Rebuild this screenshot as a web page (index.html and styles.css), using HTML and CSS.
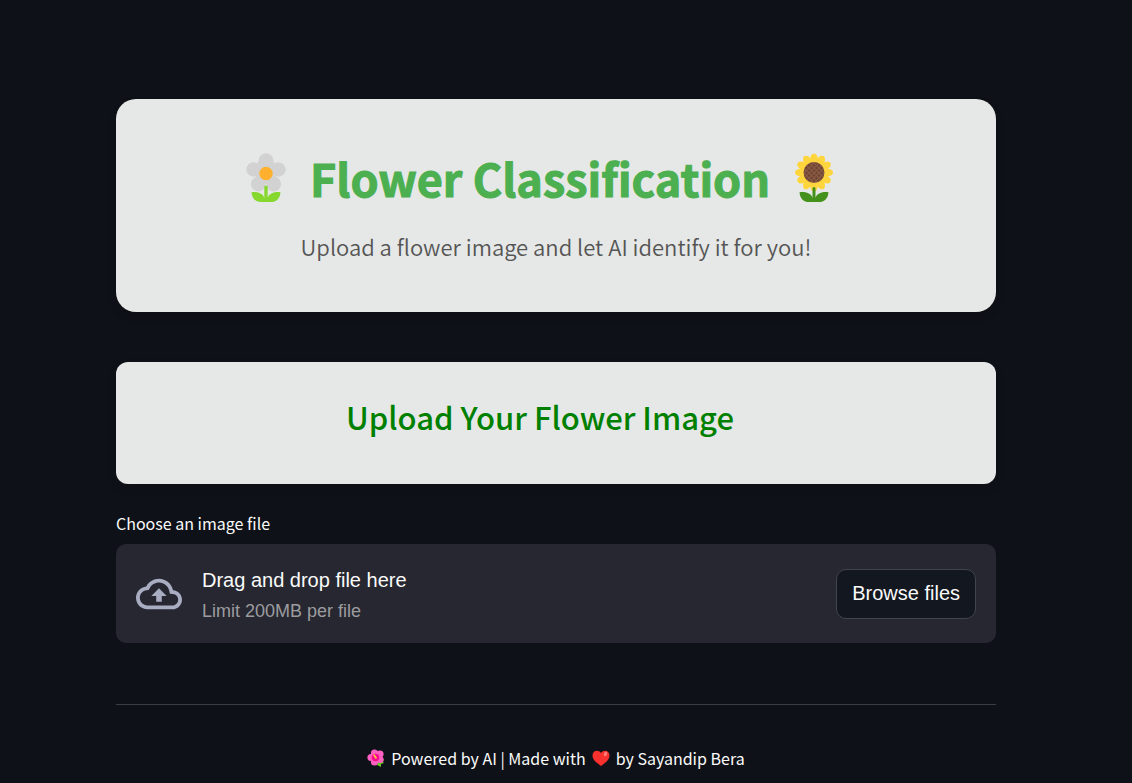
FILE: index.html
```html
<!DOCTYPE html>
<html lang="en">
<head>
<meta charset="utf-8">
<meta name="viewport" content="width=device-width, initial-scale=1">
<title>Flower Classification</title>
<link rel="stylesheet" href="styles.css">
</head>
<body>
<main class="page">
  <header class="card hero">
    <h1 class="hero-title">
      <svg class="hero-icon" viewBox="0 0 40 50" aria-hidden="true">
        <g fill="#d2d2d2"><circle cx="20" cy="7.500" r="7.300"/><circle cx="7.500" cy="16.500" r="7.200"/><circle cx="32.500" cy="16.500" r="7.200"/><circle cx="12.300" cy="31" r="7.400"/><circle cx="27.700" cy="31" r="7.400"/><path d="M13 7.500h14l5 9-4.500 14.500h-15L8 16.500z"/></g>
        <path fill="#86d82f" d="M18.300 33.500q1.700-2 3.400 0V45c1-4 6-6.800 12.800-5.800C34 46 30 49 25 49H15C10 49 6 46 5.500 39.200c6.800-1 11.800 1.800 12.800 5.800z"/>
        <circle cx="20" cy="20.500" r="6.700" fill="#ffb02e"/>
      </svg>
      <span>Flower Classification</span>
      <svg class="hero-icon" viewBox="0 0 40 50" aria-hidden="true">
        <defs><pattern id="seeds" width="5" height="5" patternUnits="userSpaceOnUse"><rect width="5" height="5" fill="#6d4534"/><path d="M0 0l5 5M5 0L0 5" stroke="#8d5b43" stroke-width="1.100"/></pattern></defs>
        <g fill="#ffd53e"><circle cx="20" cy="19.500" r="14.500"/>
          <g id="petals"><ellipse cx="20" cy="6" rx="3.800" ry="5.500"/><ellipse cx="20" cy="33" rx="3.800" ry="5.500"/></g>
          <use href="#petals" transform="rotate(30 20 19.500)"/><use href="#petals" transform="rotate(60 20 19.500)"/><use href="#petals" transform="rotate(90 20 19.500)"/><use href="#petals" transform="rotate(120 20 19.500)"/><use href="#petals" transform="rotate(150 20 19.500)"/>
        </g>
        <path fill="#44911b" d="M18.500 35q1.500-2 3 0V45c1-4 6-6.800 13-5.800C34 46 30 49 25 49H15C10 49 6 46 5.500 39.200c7-1 12 1.800 13 5.800z"/>
        <circle cx="20" cy="19.500" r="10.500" fill="url(#seeds)"/>
      </svg>
    </h1>
    <p class="hero-text">Upload a flower image and let AI identify it for you!</p>
  </header>

  <section class="card upload-card">
    <h2 class="upload-title">Upload Your Flower Image</h2>
  </section>

  <section class="uploader">
    <label class="uploader-label" for="browse">Choose an image file</label>
    <div class="dropzone">
      <svg class="cloud" viewBox="0 0 24 24" aria-hidden="true"><path d="M19.350 10.040C18.670 6.590 15.640 4 12 4 9.110 4 6.600 5.640 5.350 8.040 2.340 8.360 0 10.910 0 14c0 3.310 2.690 6 6 6h13c2.760 0 5-2.240 5-5 0-2.640-2.050-4.780-4.650-4.960zM19 18H6c-2.210 0-4-1.790-4-4 0-2.050 1.530-3.760 3.560-3.970l1.070-.11.500-.950C8.080 7.140 9.940 6 12 6c2.620 0 4.880 1.860 5.390 4.430l.3 1.500 1.530.11c1.560.1 2.780 1.410 2.780 2.960 0 1.650-1.350 3-3 3zM8 13h2.550v3h2.900v-3H16l-4-4z"/></svg>
      <div class="drop-copy">
        <span class="drop-main">Drag and drop file here</span>
        <small class="drop-limit">Limit 200MB per file</small>
      </div>
      <button class="browse" id="browse" type="button">Browse files</button>
    </div>
  </section>

  <hr class="rule">

  <footer class="footer">
    <svg class="foot-icon" viewBox="0 0 18 18" aria-hidden="true">
      <path fill="#63c51f" d="M11 11l6-1-1 3 1 1-3 1 0 3-4-2z"/>
      <g fill="#ff5fc0"><circle cx="7.500" cy="4" r="3.600"/><circle cx="13" cy="5" r="3.600"/><circle cx="4" cy="8.500" r="3.600"/><circle cx="13" cy="10.500" r="3.600"/><circle cx="7.500" cy="13" r="3.600"/></g>
      <circle cx="8.500" cy="8.500" r="3.800" fill="#f70a8d"/>
      <path d="M9 9L7 6" stroke="#ffc83d" stroke-width="1.600" stroke-linecap="round"/>
    </svg>
    <span>Powered by AI | Made with</span>
    <svg class="foot-icon" viewBox="0 0 18 18" aria-hidden="true"><path fill="#f8312f" d="M9 4C6.500.300.500 1.200.500 6.500.500 11 5 14 9 17c4-3 8.500-6 8.500-10.500C17.500 1.200 11.500.300 9 4z"/><ellipse cx="13.500" cy="5" rx="1.600" ry="2.400" fill="#ff7b78" transform="rotate(25 13.500 5)"/></svg>
    <span>by Sayandip Bera</span>
  </footer>
</main>
</body>
</html>
```
FILE: styles.css
```css
* { box-sizing: border-box; }

body {
  margin: 0;
  background: #0e1117;
  color: #fafafa;
  font-family: "Noto Sans CJK JP", "Noto Sans", sans-serif;
}

.page {
  max-width: 940px;
  margin: 0 auto;
  padding: 99px 40px 0 20px;
}

.card {
  background: #e6e8e7;
  text-align: center;
  box-shadow: 0 4px 8px rgba(0, 0, 0, 0.1);
}

.hero {
  border-radius: 20px;
  padding: 48px 40px 47px;
}

.hero-title {
  display: flex;
  align-items: center;
  justify-content: center;
  gap: 24px;
  margin: 0;
  padding-right: 32px;
  color: #4caf50;
  font-size: 45px;
  line-height: 61px;
  font-weight: 700;
  -webkit-text-stroke: 1px #4caf50;
}

.hero-icon {
  width: 40px;
  height: 50px;
  flex: none;
}

.hero-text {
  margin: 19px 0 0;
  color: #555;
  font-size: 22px;
  line-height: 38px;
  font-family: "Noto Sans CJK JP DemiLight", "Noto Sans CJK JP", sans-serif;
  font-weight: 350;
}

.upload-card {
  margin-top: 50px;
  padding: 30px 40px 42px;
  border-radius: 12px;
}

.upload-title {
  margin: 0;
  padding-right: 32px;
  color: #008000;
  font-size: 31px;
  line-height: 50px;
  font-weight: 500;
}

.uploader { margin-top: 23px; }

.uploader-label {
  display: block;
  margin-bottom: 5px;
  font-size: 16px;
  line-height: 32px;
}

.dropzone {
  display: flex;
  align-items: center;
  padding: 20px;
  border-radius: 10px;
  background: #262730;
  font-family: "Liberation Sans", Arial, sans-serif;
}

.cloud {
  width: 46px;
  height: 46px;
  margin-right: 20px;
  fill: #a9adc1;
}

.drop-copy {
  display: flex;
  flex-direction: column;
  flex: 1;
}

.drop-main {
  font-size: 20px;
  line-height: 32px;
}

.drop-limit {
  padding-top: 3px;
  color: #9c9c9f;
  font-size: 18px;
  line-height: 24px;
}

.browse {
  height: 50px;
  padding: 0 15px;
  border: 1px solid #41444c;
  border-radius: 10px;
  background: #131720;
  color: #fafafa;
  font: 20px "Liberation Sans", Arial, sans-serif;
}

.rule {
  margin: 61px 0 37px;
  border: 0;
  border-top: 1px solid #3b3d45;
}

.footer {
  display: flex;
  align-items: center;
  justify-content: center;
  gap: 6px;
  font-size: 16px;
  line-height: 32px;
}

.foot-icon {
  width: 18px;
  height: 18px;
  flex: none;
}
```
